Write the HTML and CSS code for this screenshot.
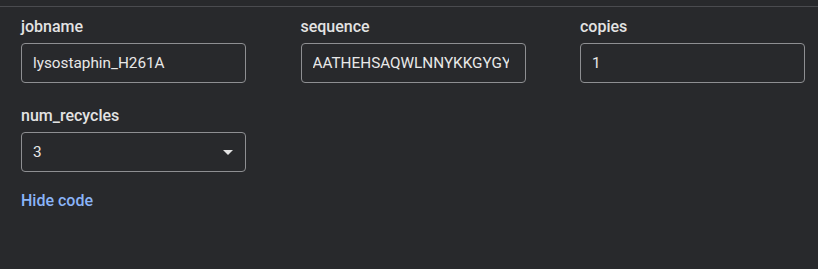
FILE: index.html
```html
<!DOCTYPE html>
<html>
<head>
<meta charset="utf-8">
<link rel="stylesheet" href="styles.css">
</head>
<body>
<div class="topline"></div>
<div class="form">
  <div class="row">
    <div class="field">
      <div class="label">jobname</div>
      <div class="input">lysostaphin_H261A</div>
    </div>
    <div class="field">
      <div class="label">sequence</div>
      <div class="input clip"><span class="cliptext">AATHEHSAQWLNNYKKGYGY</span></div>
    </div>
    <div class="field">
      <div class="label">copies</div>
      <div class="input">1</div>
    </div>
  </div>
  <div class="row">
    <div class="field">
      <div class="label">num_recycles</div>
      <div class="input select">
        <span>3</span>
        <svg class="arrow" width="10" height="5" viewBox="0 0 10 5"><path d="M0 0 L10 0 L5 5 Z" fill="#e3e3e3"/></svg>
      </div>
    </div>
  </div>
  <a class="hide">Hide code</a>
</div>
</body>
</html>
```
FILE: styles.css
```css
html, body {
  margin: 0;
  padding: 0;
  background: #28292c;
}
body {
  font-family: Roboto, "Noto Sans", sans-serif;
  color: #e3e3e3;
}
.topline {
  height: 6px;
  border-bottom: 1px solid #4a4b4f;
}
.form {
  padding: 10px 21px 0 21px;
  display: flex;
  flex-direction: column;
}
.row {
  display: grid;
  grid-template-columns: 225px 225px 225px;
  column-gap: 54.5px;
  margin-bottom: 23px;
}
.field {
  display: flex;
  flex-direction: column;
}
.label {
  font-size: 16px;
  font-weight: 500;
  line-height: 20px;
  color: #e3e3e3;
  margin-bottom: 6px;
}
.input {
  box-sizing: border-box;
  height: 40px;
  border: 1px solid #8e8f92;
  border-radius: 4px;
  padding: 0 11px;
  display: flex;
  align-items: center;
  font-size: 15.3px;
  color: #e8e8e8;
  white-space: nowrap;
  overflow: hidden;
}
.clip {
  padding-right: 0;
}
.cliptext {
  display: block;
  width: 196px;
  overflow: hidden;
}
.select {
  justify-content: space-between;
  padding-right: 12px;
}
.arrow {
  display: block;
}
.hide {
  margin-top: -4px;
  font-size: 16px;
  font-weight: 500;
  color: #8ab4f8;
  line-height: 20px;
}
```
